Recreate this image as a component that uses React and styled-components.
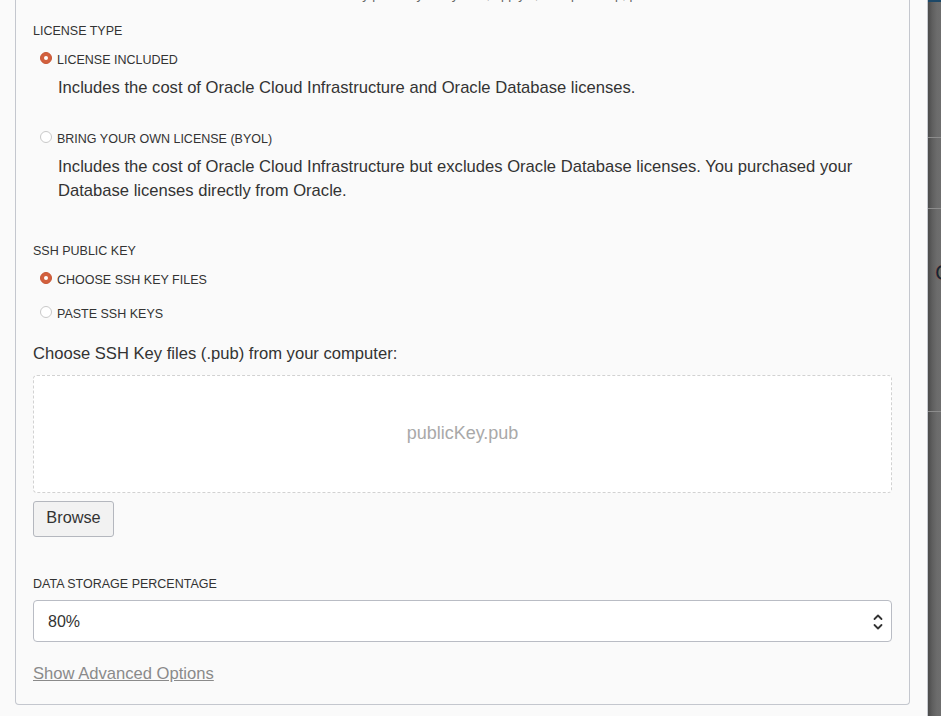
import React from 'react'
import styled, {createGlobalStyle} from 'styled-components'

const GlobalStyle = createGlobalStyle`
    html, body {
        margin: 0;
        padding: 0;
        background: #fafafa;
        overflow: hidden;
    }
    body {
        font-family: "Liberation Sans", Arial, sans-serif;
        color: #333;
    }
`

const Radio = ({checked, children, top}) => (
    <RadioRow $top={top}>
        <RadioDot $checked={checked} />
        <span>{children}</span>
    </RadioRow>
)

const Chevrons = () => (
    <svg width="12" height="20" viewBox="0 0 12 20" fill="none" stroke="#333" strokeWidth="1.8" strokeLinecap="round" strokeLinejoin="round">
        <path d="M2.5 7 L6 3.5 L9.5 7" />
        <path d="M2.5 13 L6 16.5 L9.5 13" />
    </svg>
)

const App = () => {
    return (
        <Screen>
            <GlobalStyle />
            <Main>
                <Panel>
                    <Intro>Create a key pair for your system, apply it, then pick it up, plus</Intro>

                    <SectionLabel $top={20}>License Type</SectionLabel>
                    <Radio checked top={13}>License Included</Radio>
                    <Description $top={8}>
                        Includes the cost of Oracle Cloud Infrastructure and Oracle Database licenses.
                    </Description>
                    <Radio top={31}>Bring Your Own License (BYOL)</Radio>
                    <Description $top={8}>
                        Includes the cost of Oracle Cloud Infrastructure but excludes Oracle Database licenses. You purchased your
                        Database licenses directly from Oracle.
                    </Description>

                    <SectionLabel $top={40}>SSH Public Key</SectionLabel>
                    <Radio checked top={13}>Choose SSH Key Files</Radio>
                    <Radio top={18}>Paste SSH Keys</Radio>

                    <Prompt $top={20}>Choose SSH Key files (.pub) from your computer:</Prompt>
                    <DropZone>publicKey.pub</DropZone>
                    <BrowseButton type="button">Browse</BrowseButton>

                    <SectionLabel $top={39}>Data Storage Percentage</SectionLabel>
                    <Select>
                        <span>80%</span>
                        <Chevrons />
                    </Select>

                    <AdvancedLink href="#">Show Advanced Options</AdvancedLink>
                </Panel>
            </Main>
            <Side>
                <SideTopBar />
                <SideBlock $h={135} />
                <SideBlock $h={70} />
                <SideBlock $h={202}>
                    <SideGlyph>C</SideGlyph>
                </SideBlock>
                <SideRest />
            </Side>
        </Screen>
    )
}

export default App

const Screen = styled.div`
    display: flex;
    width: 941px;
    height: 716px;
    overflow: hidden;
`
const Main = styled.div`
    width: 927px;
    flex-shrink: 0;
    border-right: 1px solid #c6c9cf;
    background: #fafafa;
`
const Panel = styled.div`
    display: flex;
    flex-direction: column;
    margin-left: 15px;
    width: 895px;
    box-sizing: border-box;
    padding: 0 17px 18px 17px;
    border: 1px solid #c4c7ce;
    border-top: none;
    border-radius: 0 0 4px 4px;
    background: #fafafa;
`
const Intro = styled.div`
    margin-top: -13px;
    height: 16px;
    line-height: 16px;
    font-size: 13px;
    color: #666;
    padding-left: 262px;
    white-space: nowrap;
    overflow: hidden;
`
const SectionLabel = styled.div`
    margin-top: ${p => p.$top}px;
    font-size: 12.5px;
    line-height: 16px;
    text-transform: uppercase;
    color: #333;
`
const RadioRow = styled.label`
    display: flex;
    align-items: center;
    gap: 5px;
    margin-top: ${p => p.$top}px;
    padding-left: 7px;
    height: 16px;
    font-size: 12.5px;
    text-transform: uppercase;
    color: #333;
`
const RadioDot = styled.span`
    position: relative;
    top: -2px;
    width: 12px;
    height: 12px;
    box-sizing: border-box;
    border-radius: 50%;
    flex-shrink: 0;
    background: ${p => (p.$checked ? '#d2603e' : '#fff')};
    border: 1px solid ${p => (p.$checked ? '#c85634' : '#c9c9c9')};

    &::after {
        content: '';
        display: ${p => (p.$checked ? 'block' : 'none')};
        position: absolute;
        left: 3px;
        top: 3px;
        width: 4px;
        height: 4px;
        border-radius: 50%;
        background: #fff;
    }
`
const Description = styled.p`
    margin: ${p => p.$top}px 0 0 0;
    padding-left: 25px;
    font-size: 16.6px;
    line-height: 24px;
    color: #333;
`
const Prompt = styled.div`
    margin-top: ${p => p.$top}px;
    font-size: 16.6px;
    line-height: 24px;
    color: #333;
`
const DropZone = styled.div`
    margin-top: 9px;
    height: 118px;
    box-sizing: border-box;
    display: flex;
    align-items: center;
    justify-content: center;
    padding-bottom: 2px;
    background: #fff;
    border: 1px dashed #d2d2d2;
    border-radius: 4px;
    font-size: 18px;
    color: #a9a9a9;
`
const BrowseButton = styled.button`
    align-self: flex-start;
    margin-top: 8px;
    width: 81px;
    height: 36px;
    box-sizing: border-box;
    background: #f2f2f2;
    border: 1px solid #b4b7be;
    border-radius: 3px;
    font-family: "Liberation Sans", Arial, sans-serif;
    font-size: 16.3px;
    color: #333;
    padding: 0 0 3px 0;
`
const Select = styled.div`
    margin-top: 8px;
    height: 42px;
    box-sizing: border-box;
    display: flex;
    align-items: center;
    justify-content: space-between;
    padding: 2px 7px 0 14px;
    background: #fff;
    border: 1px solid #b9bcc4;
    border-radius: 4px;
    font-size: 16px;
    color: #333;
`
const AdvancedLink = styled.a`
    align-self: flex-start;
    margin-top: 20px;
    font-size: 16.6px;
    line-height: 24px;
    color: #8a8a8a;
    text-decoration: underline;
`
const Side = styled.div`
    flex: 1;
    display: flex;
    flex-direction: column;
    background: linear-gradient(to right, #4a4a4a 0px, #5e5e5e 4px, #6c6c6c 9px, #6e6e6e 100%);
    overflow: hidden;
`
const SideTopBar = styled.div`
    height: 2px;
    background: #1c4868;
`
const SideBlock = styled.div`
    height: ${p => p.$h}px;
    border-bottom: 1px solid #8c8c8c;
    position: relative;
`
const SideGlyph = styled.span`
    display: block;
    margin: 52px 0 0 7px;
    font-size: 22px;
    line-height: 24px;
    color: #15243a;
    text-shadow: 0 0 1px #b06a20;
`
const SideRest = styled.div`
    flex: 1;
`
